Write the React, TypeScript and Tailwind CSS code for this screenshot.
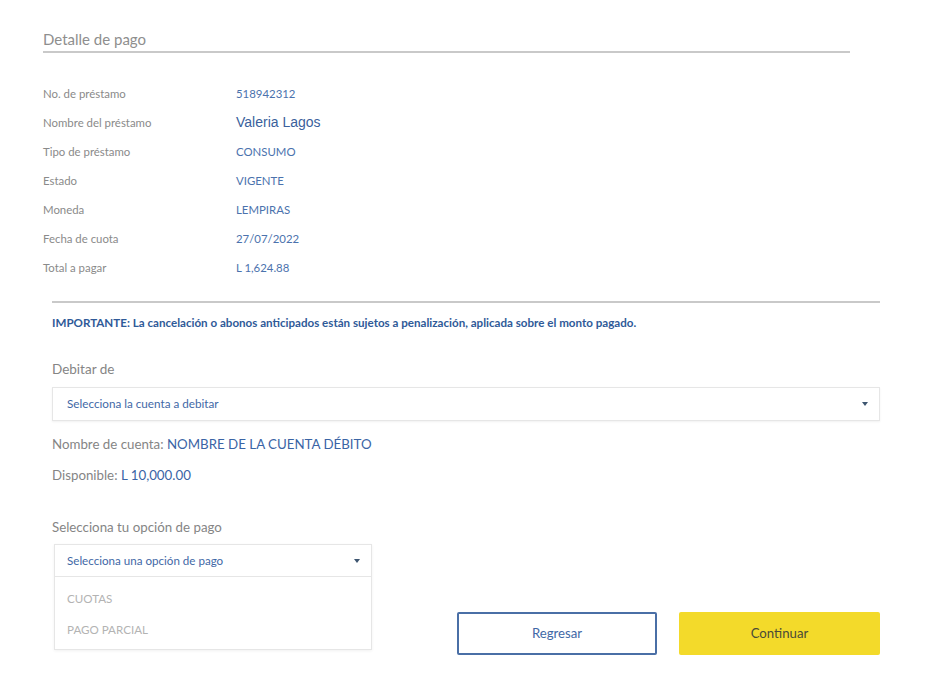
const ROWS = [
  { label: "No. de préstamo", value: "518942312" },
  { label: "Nombre del préstamo", value: "Valeria Lagos", big: true },
  { label: "Tipo de préstamo", value: "CONSUMO" },
  { label: "Estado", value: "VIGENTE" },
  { label: "Moneda", value: "LEMPIRAS" },
  { label: "Fecha de cuota", value: "27/07/2022" },
  { label: "Total a pagar", value: "L 1,624.88" },
];

function Caret() {
  return (
    <svg width="6" height="4" viewBox="0 0 6 4" className="shrink-0">
      <path d="M0 0 L6 0 L3 4 Z" fill="#3d5570" />
    </svg>
  );
}

export default function App() {
  return (
    <div className="min-h-[690px] w-[939px] bg-white pt-[30px] font-['Lato','Noto_Sans',sans-serif]">
      <div className="ml-[43px] w-[807px] border-b-2 border-[#c9c9c9] pb-[2px]">
        <h1 className="text-[15px] leading-[19px] text-[#8e8e8e]">Detalle de pago</h1>
      </div>

      <div className="ml-[43px] mt-[26px]">
        {ROWS.map((row) => (
          <div key={row.label} className="flex h-[29px] items-center">
            <span className="w-[193px] text-[11.4px] text-[#8a8a8a]">{row.label}</span>
            {row.big ? (
              <span className="font-['Liberation_Sans',Arial,sans-serif] text-[14px] text-[#3a5f9c]">
                {row.value}
              </span>
            ) : (
              <span className="text-[11.4px] text-[#4b72ad]">{row.value}</span>
            )}
          </div>
        ))}
      </div>

      <div className="ml-[52px] mt-[19px] w-[828px] border-t-2 border-[#c9c9c9]">
        <p className="mt-[12px] text-[11.6px] font-bold leading-[16px] text-[#2f5a98]">
          IMPORTANTE: La cancelación o abonos anticipados están sujetos a penalización, aplicada
          sobre el monto pagado.
        </p>

        <p className="mt-[29px] text-[13.5px] leading-[18px] text-[#858585]">Debitar de</p>
        <div className="mt-[9px] flex h-[34px] items-center justify-between border border-[#e6e6e6] pl-[14px] pr-[11px] shadow-[0_1px_2px_rgba(0,0,0,0.06)]">
          <span className="text-[11.7px] text-[#3f68a6]">Selecciona la cuenta a debitar</span>
          <Caret />
        </div>

        <p className="mt-[14px] text-[13.3px] leading-[18px] text-[#858585]">
          Nombre de cuenta: <span className="text-[#3a64a5]">NOMBRE DE LA CUENTA DÉBITO</span>
        </p>
        <p className="mt-[13px] text-[13.3px] leading-[18px] text-[#858585]">
          Disponible: <span className="text-[#3a64a5]">L 10,000.00</span>
        </p>

        <p className="mt-[34px] text-[13.3px] leading-[18px] text-[#858585]">
          Selecciona tu opción de pago
        </p>

        <div className="mt-[8px] flex items-start">
          <div className="ml-[2px] w-[318px] border border-[#e6e6e6] shadow-[0_1px_3px_rgba(0,0,0,0.06)]">
            <div className="flex h-[32px] items-center justify-between border-b border-[#e6e6e6] pl-[12px] pr-[11px]">
              <span className="text-[11.6px] text-[#3f68a6]">Selecciona una opción de pago</span>
              <Caret />
            </div>
            <div className="pb-[4px] pt-[6px]">
              <div className="flex h-[31px] items-center pl-[12px] text-[11.6px] text-[#b3b3b3]">
                CUOTAS
              </div>
              <div className="flex h-[31px] items-center pl-[12px] text-[11.6px] text-[#b3b3b3]">
                PAGO PARCIAL
              </div>
            </div>
          </div>

          <div className="ml-[85px] mt-[68px] flex gap-[22px]">
            <button className="flex h-[43px] w-[200px] items-center justify-center rounded-[2px] border-2 border-[#4a6fa6] bg-white text-[13.2px] text-[#3f68a6]">
              Regresar
            </button>
            <button className="flex h-[43px] w-[201px] items-center justify-center rounded-[2px] bg-[#f3da2a] text-[13.2px] text-[#4a4a38]">
              Continuar
            </button>
          </div>
        </div>
      </div>
    </div>
  );
}
